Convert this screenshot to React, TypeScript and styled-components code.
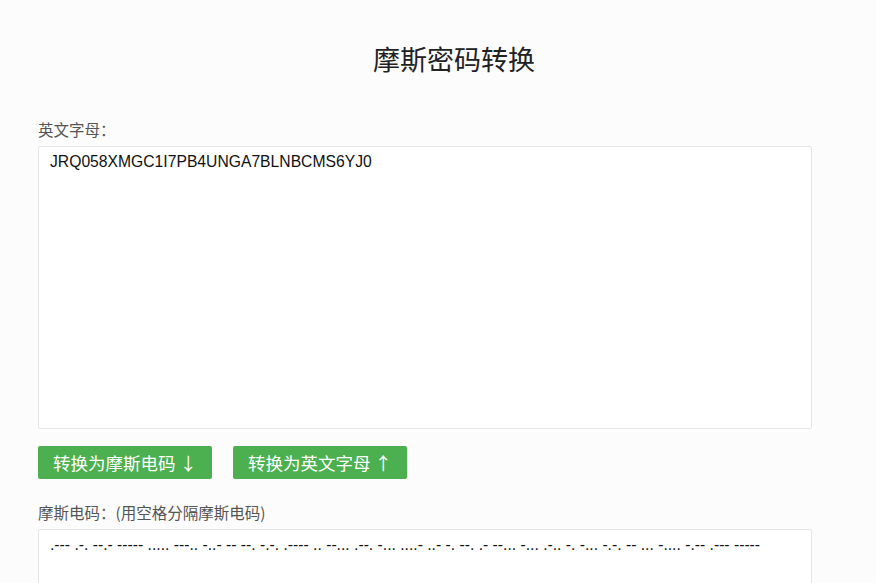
import React, { useState } from 'react'
import styled, { createGlobalStyle } from 'styled-components'

const GlobalStyle = createGlobalStyle`
  html, body {
    margin: 0;
    padding: 0;
    background: #fcfcfc;
    font-family: "Liberation Sans", "Noto Sans CJK SC", sans-serif;
  }
`

const Page = styled.div`
  width: 832px;
  margin-left: 38px;
  padding-top: 37px;
`

const Title = styled.h1`
  margin: 0;
  height: 44px;
  line-height: 44px;
  text-align: center;
  font-family: "Noto Sans CJK SC", sans-serif;
  font-size: 27px;
  font-weight: 400;
  color: #222;
`

const Label = styled.div<{ $top: number }>`
  margin-top: ${p => p.$top}px;
  height: 22px;
  line-height: 22px;
  font-family: "Noto Sans CJK SC", sans-serif;
  font-size: 15.5px;
  color: #555;
`

const Field = styled.textarea`
  display: block;
  box-sizing: border-box;
  width: 774px;
  height: 283px;
  margin-top: 6px;
  padding: 5px 11px;
  border: 1px solid #e6e6e6;
  border-radius: 2px;
  background: #fff;
  resize: none;
  outline: none;
  font-family: "Liberation Sans", sans-serif;
  font-size: 15.7px;
  line-height: 20px;
  color: #111;
`

const Buttons = styled.div`
  display: flex;
  gap: 21px;
  margin-top: 17px;
`

const Button = styled.button`
  box-sizing: border-box;
  width: 174px;
  height: 33px;
  padding: 0;
  border: none;
  border-radius: 2px;
  background: #4caf50;
  color: #fff;
  font-family: "Noto Sans CJK SC", sans-serif;
  font-size: 17.5px;
  line-height: 33px;
  cursor: pointer;
`

const morse: Record<string, string> = {
  A: '.-', B: '-...', C: '-.-.', D: '-..', E: '.', F: '..-.', G: '--.', H: '....',
  I: '..', J: '.---', K: '-.-', L: '.-..', M: '--', N: '-.', O: '---', P: '.--.',
  Q: '--.-', R: '.-.', S: '...', T: '-', U: '..-', V: '...-', W: '.--', X: '-..-',
  Y: '-.--', Z: '--..', '0': '-----', '1': '.----', '2': '..---', '3': '...--',
  '4': '....-', '5': '.....', '6': '-....', '7': '--...', '8': '---..', '9': '----.',
}

const toMorse = (s: string) =>
  s.toUpperCase().split('').map(c => morse[c] || '').filter(Boolean).join(' ')

export default function App() {
  const [text, setText] = useState('JRQ058XMGC1I7PB4UNGA7BLNBCMS6YJ0')
  const [code, setCode] = useState(toMorse('JRQ058XMGC1I7PB4UNGA7BLNBCMS6YJ0'))

  const fromMorse = () => {
    const rev: Record<string, string> = {}
    Object.keys(morse).forEach(k => (rev[morse[k]] = k))
    setText(code.trim().split(/\s+/).map(c => rev[c] || '').join(''))
  }

  return (
    <Page>
      <GlobalStyle />
      <Title>摩斯密码转换</Title>
      <Label $top={37}>英文字母：</Label>
      <Field value={text} onChange={e => setText(e.target.value)} />
      <Buttons>
        <Button onClick={() => setCode(toMorse(text))}>转换为摩斯电码 ↓</Button>
        <Button onClick={fromMorse}>转换为英文字母 ↑</Button>
      </Buttons>
      <Label $top={22}>摩斯电码：(用空格分隔摩斯电码)</Label>
      <Field value={code} onChange={e => setCode(e.target.value)} />
    </Page>
  )
}
